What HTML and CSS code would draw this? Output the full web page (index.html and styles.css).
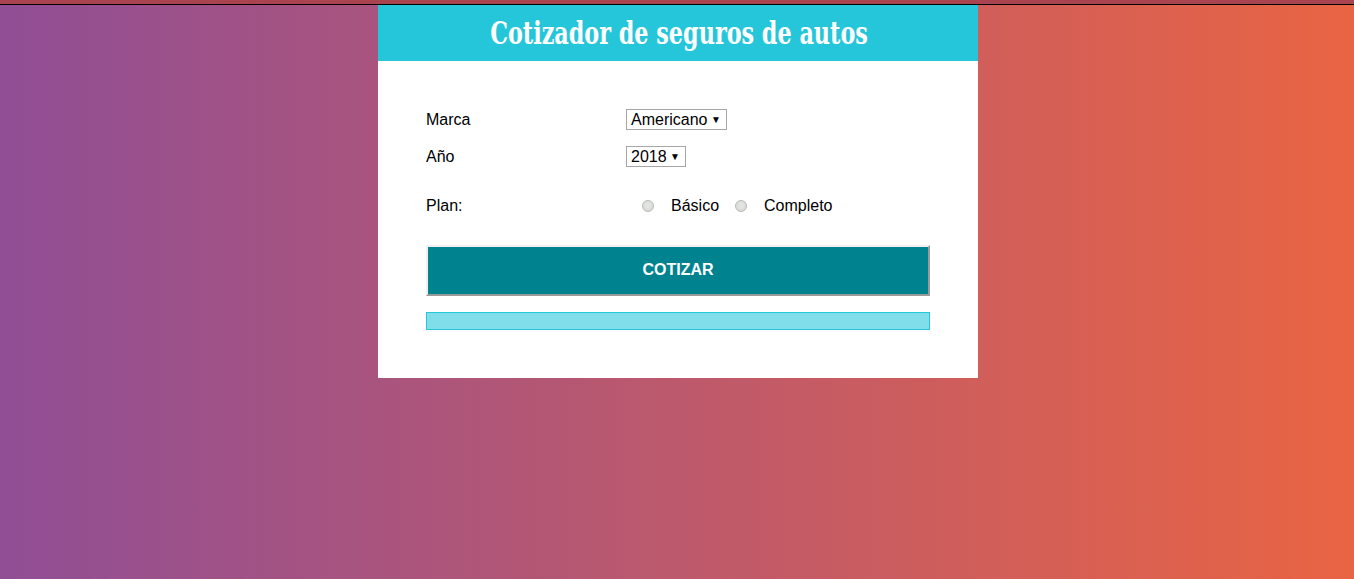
FILE: index.html
```html
<!DOCTYPE html>
<html lang="es">
<head>
<meta charset="utf-8">
<title>Cotizador de seguros de autos</title>
<link rel="stylesheet" href="styles.css">
</head>
<body>
<div class="topbar"></div>
<div class="card">
  <header class="card-header">
    <h1 class="title">Cotizador de seguros de autos</h1>
  </header>
  <form class="form">
    <div class="row row-marca">
      <label class="label" for="marca">Marca</label>
      <span class="select-wrap">
        <select id="marca" class="select">
          <option>Americano</option>
          <option>Europeo</option>
          <option>Asiático</option>
        </select>
      </span>
    </div>
    <div class="row row-year">
      <label class="label" for="year">Año</label>
      <span class="select-wrap">
        <select id="year" class="select">
          <option>2018</option>
          <option>2017</option>
          <option>2016</option>
        </select>
      </span>
    </div>
    <div class="row row-plan">
      <span class="label">Plan:</span>
      <div class="radios">
        <input type="radio" name="plan" class="radio" id="basico">
        <label for="basico" class="radio-label">Básico</label>
        <input type="radio" name="plan" class="radio" id="completo">
        <label for="completo" class="radio-label">Completo</label>
      </div>
    </div>
    <button type="button" class="btn">COTIZAR</button>
    <div class="message"></div>
  </form>
</div>
</body>
</html>
```
FILE: styles.css
```css
html, body {
  margin: 0;
  padding: 0;
}
body {
  min-height: 100vh;
  padding-left: 2px;
  box-sizing: border-box;
  background: linear-gradient(to right, #904e95, #e96443);
  font-family: "Liberation Sans", Arial, sans-serif;
  font-size: 16px;
  color: #000;
}
.topbar {
  height: 4px;
  margin-left: -2px;
  background: #a8434f;
  border-bottom: 1px solid #000;
}
.card {
  width: 600px;
  margin: 0 auto;
  background: #fff;
}
.card-header {
  height: 56px;
  background: #26c6da;
  display: flex;
  align-items: center;
  justify-content: center;
}
.title {
  margin: 0 0 0 2px;
  color: #fff;
  font-family: "DejaVu Serif Condensed", "DejaVu Serif", serif;
  font-weight: bold;
  font-size: 31px;
  letter-spacing: 0;
  white-space: nowrap;
  transform: scaleX(0.8);
}
.form {
  padding: 48px;
  display: flex;
  flex-direction: column;
}
.row {
  display: flex;
  align-items: center;
  height: 21px;
}
.row-marca { margin-bottom: 16px; }
.row-year { margin-bottom: 28px; }
.row-plan { margin-bottom: 29px; }
.label {
  width: 200px;
  flex: none;
}
.select-wrap {
  position: relative;
  display: inline-block;
}
.select-wrap::after {
  content: "▼";
  position: absolute;
  right: 6px;
  top: 6px;
  font-size: 10px;
  line-height: 9px;
  color: #000;
  pointer-events: none;
}
.select {
  appearance: none;
  -webkit-appearance: none;
  display: block;
  height: 21px;
  margin: 0;
  padding: 0 18px 0 4px;
  border: 1px solid #a6a6a6;
  border-radius: 0;
  background: #fff;
  font-family: "Liberation Sans", Arial, sans-serif;
  font-size: 16px;
  color: #000;
}
.radios {
  display: flex;
  align-items: center;
}
.radio {
  appearance: none;
  -webkit-appearance: none;
  width: 12px;
  height: 12px;
  margin: 0 17px 0 16px;
  border: 1px solid #b9b9b3;
  border-radius: 50%;
  background: radial-gradient(circle at 50% 45%, #e6e8e6 0%, #d8dcd8 70%, #c8ccc8 100%);
  box-sizing: border-box;
}
.radio-label {
  line-height: 21px;
}
.radio + .radio-label + .radio {
  margin-left: 16px;
  margin-right: 17px;
}
.btn {
  height: 51px;
  width: 100%;
  margin: 0 0 16px;
  padding: 0 0 2px;
  background: #00838f;
  color: #fff;
  font-family: "Liberation Sans", Arial, sans-serif;
  font-weight: bold;
  font-size: 16px;
  border: 2px solid;
  border-color: #f0f0f0 #9a9a9a #9a9a9a #f0f0f0;
}
.message {
  height: 16px;
  background: #80deea;
  border: 1px solid #26c6da;
}
```
